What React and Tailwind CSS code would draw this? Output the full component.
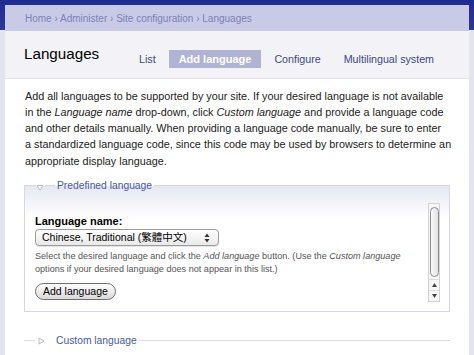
export default function App() {
  return (
    <div className="w-[474px] h-[355px] overflow-hidden bg-[linear-gradient(to_bottom,#1f2b8f_0px,#2c3899_30px,#e4e4ee_30px)] px-[5px] pt-[5px] font-['Liberation_Sans',Arial,sans-serif]">
      <div className="w-[464px] h-[350px] bg-white">
        <div className="h-[26px] bg-[#c9cae5] flex items-center pl-[20px] text-[10px] text-[#7c82b7]">
          Home › Administer › Site configuration › Languages
        </div>
        <div className="h-[48px] bg-[#f3f3f7] border-b border-[#e1e1ea] flex items-start pl-[19px] pt-[14px]">
          <h1 className="text-[15.2px] leading-[18px] text-black w-[105px]">Languages</h1>
          <nav className="flex gap-[3px] mt-[5px] text-[10.7px] text-[#3b4883]">
            <span className="h-[18px] px-[10px] flex items-center">List</span>
            <span className="h-[18px] px-[10px] flex items-center bg-[#b1b3d5] text-white font-bold text-[11px]">Add language</span>
            <span className="h-[18px] px-[10px] flex items-center">Configure</span>
            <span className="h-[18px] px-[10px] flex items-center">Multilingual system</span>
          </nav>
        </div>
        <div className="px-[19px]">
          <p className="mt-[8.5px] ml-[1px] text-[10.8px] leading-[16.3px] text-[#222] whitespace-nowrap">
            Add all languages to be supported by your site. If your desired language is not available
            <br />
            in the <em>Language name</em> drop-down, click <em>Custom language</em> and provide a language code
            <br />
            and other details manually. When providing a language code manually, be sure to enter
            <br />
            a standardized language code, since this code may be used by browsers to determine an
            <br />
            appropriate display language.
          </p>
          <fieldset className="mt-[10px] border border-[#d6d6e4] pl-[10px] pr-[9px] pb-[9px] bg-[linear-gradient(to_bottom,#e7e7f3,#ffffff_32px)]">
            <legend className="ml-[1px] flex items-center h-[14px]">
              <svg width="8" height="7" viewBox="0 0 8 7" className="mt-[3px]">
                <path d="M1 1.5 H7 L4 6 Z" fill="#fff" stroke="#b5b5c0" strokeWidth="0.9" />
              </svg>
              <span className="w-[10px] h-px bg-[#d6d6e4] ml-[1px]" />
              <span className="px-[2px] text-[10.3px] text-[#4957a6]">Predefined language</span>
            </legend>
            <div className="mt-[10px] flex h-[99px]">
              <div className="flex-1 pt-[11.5px]">
                <div className="text-[11px] leading-[14px] font-bold text-black">Language name:</div>
                <div className="mt-[1px] w-[184px] h-[17px] rounded-[4px] border border-[#9c9c9c] bg-[linear-gradient(to_bottom,#ffffff,#e9e9e9)] shadow-[0_1px_1px_rgba(0,0,0,0.12)] flex items-center pl-[6px] pr-[8px]">
                  <span className="flex-1 text-[10.5px] text-black font-['Liberation_Sans','Noto_Sans_CJK_TC',sans-serif]">Chinese, Traditional (繁體中文)</span>
                  <svg width="6" height="10" viewBox="0 0 6 10">
                    <path d="M3 0.5 L5.5 4 H0.5 Z" fill="#333" />
                    <path d="M3 9.5 L5.5 6 H0.5 Z" fill="#333" />
                  </svg>
                </div>
                <div className="mt-[4px] text-[9.1px] leading-[12.5px] text-[#555] whitespace-nowrap">
                  Select the desired language and click the <em>Add language</em> button. (Use the <em>Custom language</em>
                  <br />
                  options if your desired language does not appear in this list.)
                </div>
                <button className="mt-[8px] h-[17px] px-[7px] rounded-full border border-[#707070] bg-[linear-gradient(to_bottom,#ffffff,#d9d9d9)] text-[10.5px] leading-[15px] text-black">
                  Add language
                </button>
              </div>
              <div className="w-[12px] h-[99px] border border-[#d3d3d3] bg-[#f6f6f6] flex flex-col items-center">
                <div className="mt-[3px] w-[9px] h-[70px] rounded-full border border-[#8c8c8c] bg-[linear-gradient(to_right,#fafafa,#e2e2e2)]" />
                <div className="mt-[2px] w-full h-[11px] border-t border-[#dcdcdc] flex items-center justify-center">
                  <svg width="5" height="4" viewBox="0 0 5 4"><path d="M2.5 0 L5 4 H0 Z" fill="#444" /></svg>
                </div>
                <div className="w-full h-[11px] border-t border-[#dcdcdc] flex items-center justify-center">
                  <svg width="5" height="4" viewBox="0 0 5 4"><path d="M2.5 4 L5 0 H0 Z" fill="#444" /></svg>
                </div>
              </div>
            </div>
          </fieldset>
          <div className="mt-[22px] h-[14px] flex items-center">
            <span className="w-[11px] h-px bg-[#dcdce6]" />
            <svg width="7" height="8" viewBox="0 0 7 8" className="ml-[3px]">
              <path d="M1 1 L6 4 L1 7 Z" fill="#fff" stroke="#b5b5c0" strokeWidth="0.9" />
            </svg>
            <span className="ml-[11px] text-[10.3px] text-[#4957a6]">Custom language</span>
            <span className="flex-1 h-px bg-[#dcdce6] ml-[2px]" />
          </div>
        </div>
      </div>
    </div>
  );
}
